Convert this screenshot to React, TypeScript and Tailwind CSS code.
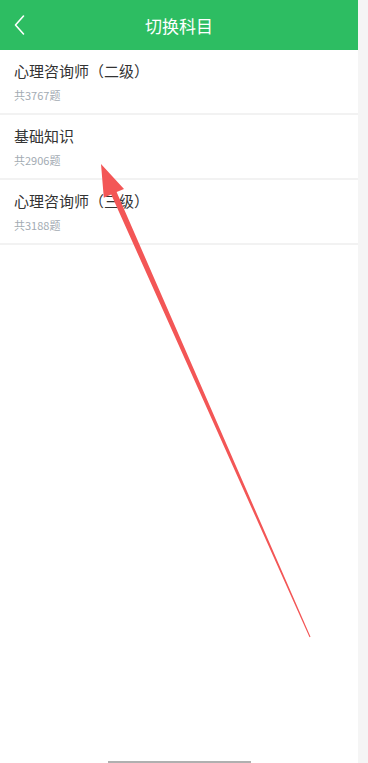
import React from "react";

const subjects = [
  { name: "心理咨询师（二级）", count: 3767 },
  { name: "基础知识", count: 2906 },
  { name: "心理咨询师（三级）", count: 3188 },
];

export default function App() {
  return (
    <div
      className="relative flex h-[763px] w-[368px] overflow-hidden bg-white"
      style={{ fontFamily: '"Noto Sans CJK SC", "Noto Sans", sans-serif' }}
    >
      <div className="flex w-[358px] flex-col">
        <header className="relative flex h-[50px] shrink-0 items-center justify-center bg-[#2dbd62]">
          <button type="button" className="absolute left-[12px] top-[13px] text-white" aria-label="返回">
            <svg width="16" height="24" viewBox="0 0 16 24" fill="none">
              <path d="M11.5 3 L3.5 12 L11.5 21" stroke="white" strokeWidth="1.6" strokeLinecap="round" strokeLinejoin="round" />
            </svg>
          </button>
          <h1 className="text-[17px] font-normal leading-none text-white">切换科目</h1>
        </header>

        <ul>
          {subjects.map((s) => (
            <li key={s.name} className="flex h-[65px] flex-col border-b-2 border-[#f2f2f2] px-[14px] pt-[10px]">
              <span className="text-[15px] leading-[22px] text-[#333]">{s.name}</span>
              <span className="mt-[6px] text-[11px] leading-[14px] text-[#a3abb3]">共{s.count}题</span>
            </li>
          ))}
        </ul>

        <div className="mt-auto flex justify-center">
          <div className="h-[2px] w-[143px] bg-[#b0b0b0]" />
        </div>
      </div>
      <div className="flex-1 bg-[#f5f5f5]" />

      <svg className="pointer-events-none absolute inset-0" width="368" height="763" viewBox="0 0 368 763">
        <polygon
          points="101,164 124,189 116.6,192.1 310.5,636.8 309.5,637.2 111.2,194.5 103.8,197.7"
          fill="#f35656"
        />
      </svg>
    </div>
  );
}
